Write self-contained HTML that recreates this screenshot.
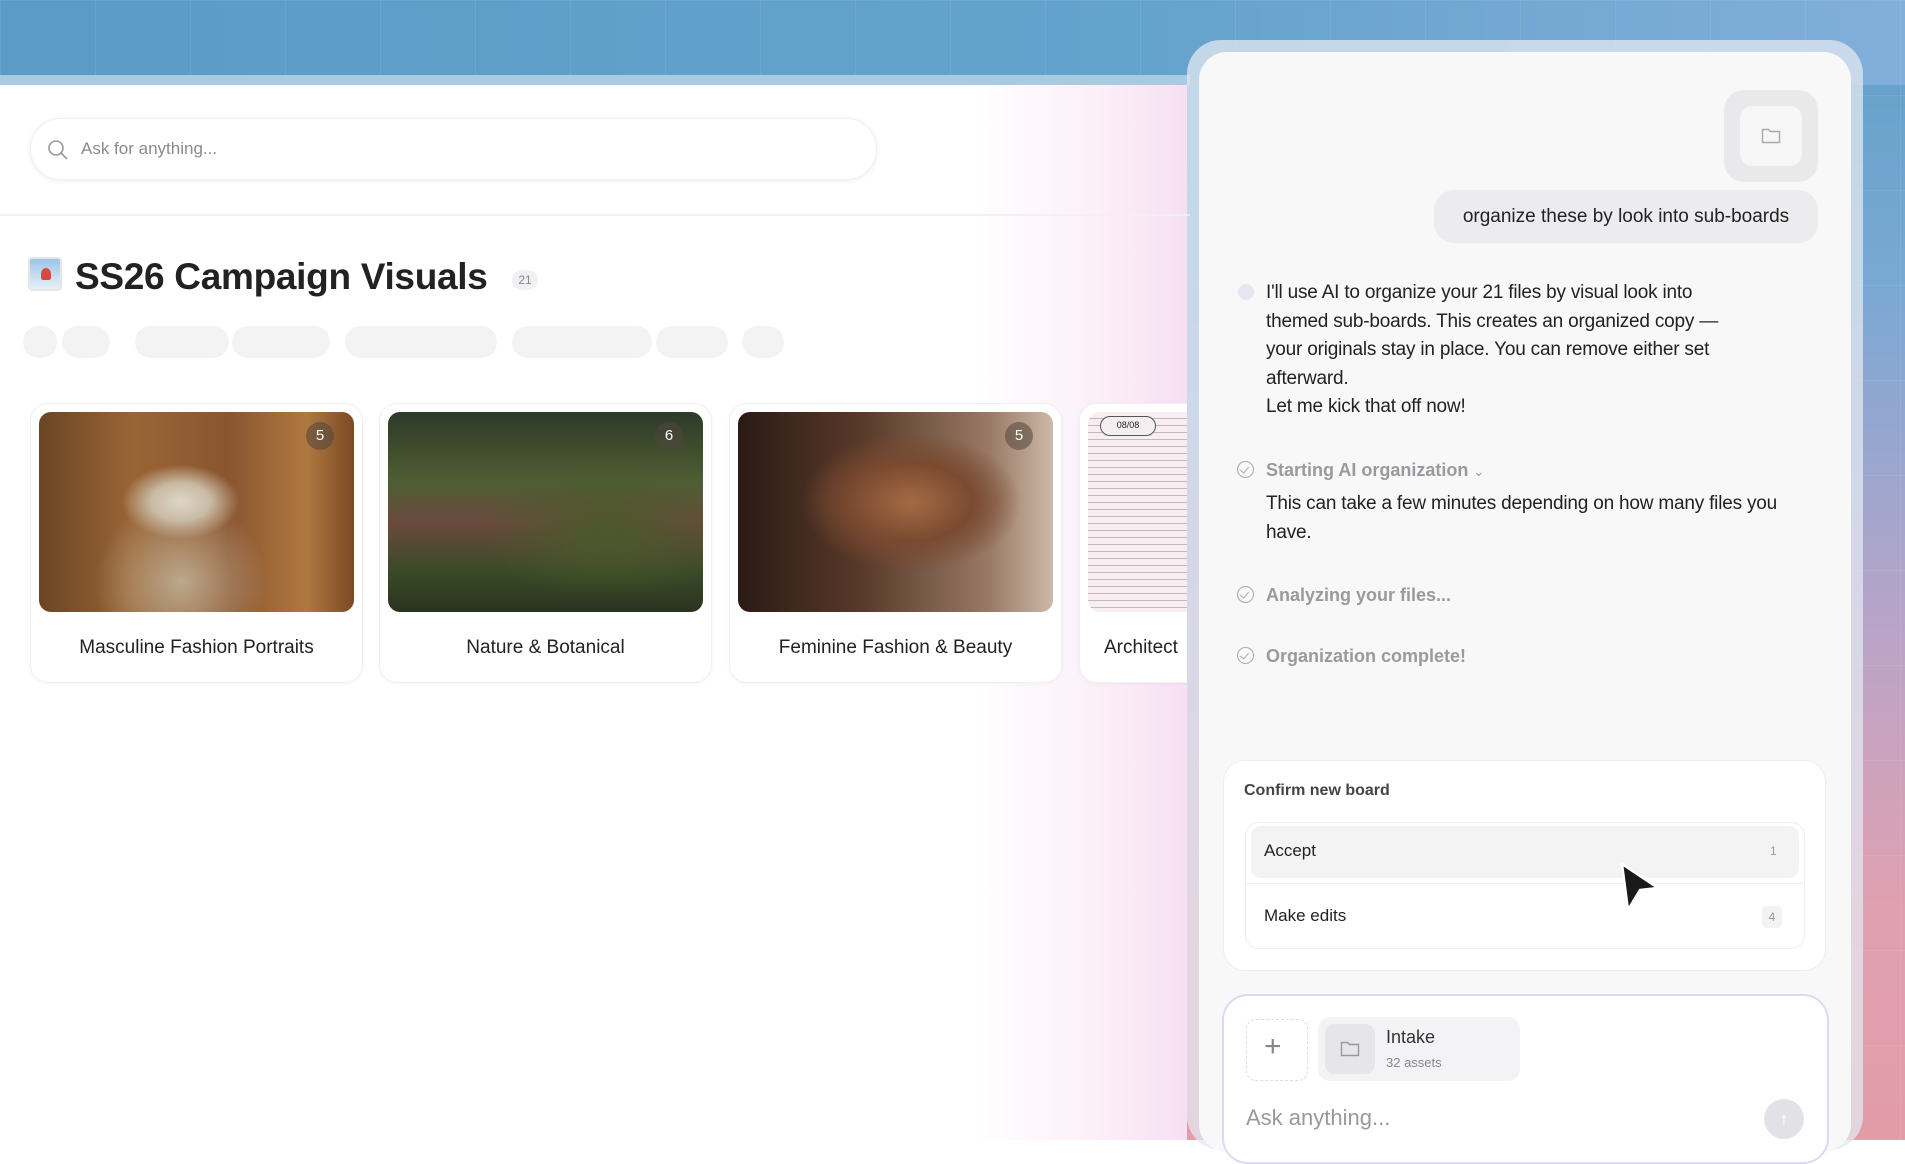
<!DOCTYPE html>
<html><head><meta charset="utf-8"><style>
*{box-sizing:border-box;margin:0;padding:0}
body{width:1905px;height:1140px;overflow:hidden;font-family:"Liberation Sans",sans-serif;position:relative;background:#fff;color:#1e1e1e}
.bgtop{position:absolute;left:0;top:0;width:1905px;height:1140px;background:linear-gradient(180deg,#5fa0c8 0%,#7aa8d4 25%,#b9a4c8 55%,#e0a0b0 80%,#e29ca8 100%)}
.bgtop2{position:absolute;left:0;top:0;width:1905px;height:85px;background:linear-gradient(90deg,#5a9cc6,#64a3cc 60%,#82aedb)}
.grid{position:absolute;inset:0;background-image:linear-gradient(rgba(255,255,255,.08) 1px,transparent 1px),linear-gradient(90deg,rgba(255,255,255,.08) 1px,transparent 1px);background-size:95px 95px}
.main{position:absolute;left:0;top:85px;width:1187px;height:1055px;background:linear-gradient(90deg,#fff 0%,#fff 82%,#fcf0f8 92%,#f6e0f2 100%);overflow:hidden}
.strip{position:absolute;left:0;top:75px;width:1190px;height:10px;background:#a9cbe2}
.search{position:absolute;left:30px;top:118px;width:847px;height:62px;border-radius:31px;background:#fff;box-shadow:0 1px 6px rgba(0,0,0,.08);border:1px solid #f0f0f0}
.search span{position:absolute;left:50px;top:20px;font-size:17px;color:#8a8a8a}
.divider{position:absolute;left:0;top:214px;width:1190px;height:2px;background:#f1f1f1}
.title{position:absolute;left:75px;top:256px;font-size:37px;font-weight:bold;color:#222;letter-spacing:-0.3px}
.badge{position:absolute;left:512px;top:270px;width:26px;height:20px;border-radius:10px;background:#f0f0f2;font-size:12px;color:#888;text-align:center;line-height:20px}
.pill{position:absolute;top:326px;height:32px;border-radius:16px;background:#f3f3f3}
.card{position:absolute;top:403px;width:333px;height:280px;border-radius:18px;background:#fff;border:1px solid #f0f0f0;box-shadow:0 1px 4px rgba(0,0,0,.04);overflow:hidden}
.card .img{position:absolute;left:8px;top:8px;right:8px;height:200px;border-radius:12px}
.card .lbl{position:absolute;left:0;right:0;top:233px;text-align:center;font-size:19px;color:#222}
.num{position:absolute;top:10px;right:20px;width:28px;height:28px;border-radius:14px;background:rgba(80,70,60,.55);color:#fff;font-size:15px;text-align:center;line-height:28px}
.panelo{position:absolute;left:1187px;top:40px;width:676px;height:1110px;border-radius:34px;background:rgba(225,232,240,.75)}
.panel{position:absolute;left:1199px;top:52px;width:652px;height:1100px;border-radius:28px;background:#f8f8f8}
.fbtn{position:absolute;left:1724px;top:90px;width:94px;height:92px;border-radius:20px;background:#e9e9eb}
.fbtn div{position:absolute;left:16px;top:16px;width:62px;height:60px;border-radius:12px;background:#f6f6f6}
.bubble{position:absolute;left:1434px;top:190px;width:384px;height:53px;border-radius:20px;background:#ececee;font-size:19px;line-height:53px;text-align:center;color:#222}
.ai{position:absolute;left:1266px;font-size:19px;color:#222;line-height:28.5px;letter-spacing:-0.2px}
.step{position:absolute;left:1266px;font-size:18px;font-weight:bold;color:#9a9a9e}
.chk{position:absolute;left:1237px;width:17px;height:17px;border:1.5px solid #aaa;border-radius:50%}
.chk:after{content:"";position:absolute;left:4px;top:3px;width:4px;height:7px;border:solid #aaa;border-width:0 1.5px 1.5px 0;transform:rotate(40deg)}
.confirm{position:absolute;left:1223px;top:760px;width:603px;height:211px;border-radius:22px;background:#fff;border:1px solid #eee}
.list{position:absolute;left:1245px;top:822px;width:560px;height:127px;border-radius:14px;border:1px solid #eceef0;background:#fff}
.acc{position:absolute;left:1251px;top:826px;width:548px;height:52px;border-radius:10px;background:#f3f3f4}
.input{position:absolute;left:1222px;top:994px;width:607px;height:170px;border-radius:26px;background:#fff;border:2px solid #ddd8f3}
</style></head><body>
<div class="bgtop"></div><div class="bgtop2"></div><div class="grid"></div>
<div class="strip"></div>
<div class="main">
<div class="card" style="left:1079px;top:318px;width:130px"><div class="img" style="right:0;background:repeating-linear-gradient(180deg,#f6eef0 0,#f6eef0 6px,#c9b6ba 6px,#c9b6ba 7px);top:8px"><div style="position:absolute;left:12px;top:4px;width:56px;height:20px;border:1.5px solid #555;border-radius:10px;background:#f5eef0;font-size:9px;text-align:center;line-height:17px">08/08</div></div><div class="lbl" style="text-align:left;left:24px">Architect</div></div>
</div>
<div class="search"><svg style="position:absolute;left:16px;top:20px" width="22" height="22" viewBox="0 0 22 22"><circle cx="9" cy="9" r="7" fill="none" stroke="#999" stroke-width="1.6"/><path d="M14 14l6 6" stroke="#999" stroke-width="1.6"/></svg><span>Ask for anything...</span></div>
<div class="divider"></div>
<div style="position:absolute;left:28px;top:257px;width:34px;height:34px;border-radius:4px;background:linear-gradient(180deg,#9cc6e8,#e8f0f6);border:2px solid #e6e6e6"><div style="position:absolute;left:11px;top:9px;width:10px;height:12px;background:#d84a3a;border-radius:50% 50% 20% 20%"></div></div>
<div class="title">SS26 Campaign Visuals</div>
<div class="badge">21</div>
<div class="pill" style="left:23px;width:34px"></div><div class="pill" style="left:62px;width:48px"></div>
<div class="pill" style="left:135px;width:94px"></div><div class="pill" style="left:232px;width:98px"></div>
<div class="pill" style="left:345px;width:152px"></div>
<div class="pill" style="left:512px;width:140px"></div><div class="pill" style="left:656px;width:72px"></div><div class="pill" style="left:742px;width:42px"></div>

<div class="card" style="left:30px"><div class="img" style="background:radial-gradient(ellipse at 45% 45%,#ddd6c8 0,#c9bba5 12%,transparent 24%),radial-gradient(ellipse at 45% 85%,#bca88c 0,transparent 35%),linear-gradient(90deg,#6a4526,#9a6535 30%,#8a5530 60%,#b07840 85%,#7a4a25)"><div class="num">5</div></div><div class="lbl">Masculine Fashion Portraits</div></div>
<div class="card" style="left:379px"><div class="img" style="background:radial-gradient(ellipse at 70% 60%,#4a5a2a 0,transparent 40%),linear-gradient(180deg,#2e3a2a 0%,#4f5e33 35%,#6a4a3e 55%,#3a4a28 80%,#2a3320)"><div class="num">6</div></div><div class="lbl">Nature &amp; Botanical</div></div>
<div class="card" style="left:729px"><div class="img" style="background:radial-gradient(ellipse at 55% 45%,#a56a45 0,#7a4a30 25%,transparent 45%),linear-gradient(90deg,#2a1a14,#5a3a2a 40%,#9a7a66 80%,#cdb9a8)"><div class="num">5</div></div><div class="lbl">Feminine Fashion &amp; Beauty</div></div>

<div class="panelo"></div>
<div class="panel"></div>
<div class="fbtn"><div></div></div>
<svg style="position:absolute;left:1761px;top:127px" width="20" height="18" viewBox="0 0 20 18"><path d="M1.5 2.5h6l2 2h9v11h-17z" fill="none" stroke="#aaa" stroke-width="1.4"/></svg>
<div class="bubble">organize these by look into sub-boards</div>
<div style="position:absolute;left:1238px;top:284px;width:16px;height:16px;border-radius:50%;background:#e8e4f2"></div>
<div class="ai" style="top:279px">I'll use AI to organize your 21 files by visual look into<br>themed sub-boards. This creates an organized copy —<br>your originals stay in place. You can remove either set<br>afterward.<br>Let me kick that off now!</div>
<div class="chk" style="top:461px"></div><div class="step" style="top:460px">Starting AI organization <span style="font-weight:normal;font-size:13px">⌄</span></div>
<div class="ai" style="top:490px">This can take a few minutes depending on how many files you<br>have.</div>
<div class="chk" style="top:586px"></div><div class="step" style="top:585px">Analyzing your files...</div>
<div class="chk" style="top:647px"></div><div class="step" style="top:646px">Organization complete!</div>

<div class="confirm"></div>
<div style="position:absolute;left:1244px;top:782px;font-size:16px;font-weight:bold;color:#444">Confirm new board</div>
<div class="list"></div>
<div class="acc"></div>
<div style="position:absolute;left:1245px;top:883px;width:560px;height:1px;background:#eceef0"></div>
<div style="position:absolute;left:1264px;top:841px;font-size:17px;color:#222">Accept</div>
<div style="position:absolute;left:1770px;top:844px;font-size:12px;color:#999">1</div>
<div style="position:absolute;left:1264px;top:906px;font-size:17px;color:#222">Make edits</div>
<div style="position:absolute;left:1762px;top:906px;width:20px;height:22px;border-radius:4px;background:#f3f3f4;font-size:12px;color:#999;text-align:center;line-height:22px">4</div>
<svg style="position:absolute;left:1614px;top:860px" width="52" height="56" viewBox="0 0 52 56"><path d="M8 4 L44 28 L26 30 L14 50 Z" fill="#1a1a1a" stroke="#fff" stroke-width="2.5" stroke-linejoin="round"/></svg>

<div class="input"></div>
<div style="position:absolute;left:1246px;top:1019px;width:62px;height:62px;border-radius:10px;border:1.5px dashed #ddd"></div>
<div style="position:absolute;left:1264px;top:1030px;font-size:30px;color:#888;font-weight:300">+</div>
<div style="position:absolute;left:1318px;top:1017px;width:202px;height:64px;border-radius:12px;background:#f3f3f5"></div>
<div style="position:absolute;left:1325px;top:1024px;width:50px;height:50px;border-radius:10px;background:#e6e6e9"></div>
<svg style="position:absolute;left:1340px;top:1040px" width="20" height="18" viewBox="0 0 20 18"><path d="M1.5 2.5h6l2 2h9v11h-17z" fill="none" stroke="#999" stroke-width="1.4"/></svg>
<div style="position:absolute;left:1386px;top:1027px;font-size:18px;color:#333">Intake</div>
<div style="position:absolute;left:1386px;top:1055px;font-size:13px;color:#888">32 assets</div>
<div style="position:absolute;left:1246px;top:1105px;font-size:22px;color:#999">Ask anything...</div>
<div style="position:absolute;left:1764px;top:1099px;width:40px;height:40px;border-radius:50%;background:#e2e2e6;color:#fff;text-align:center;line-height:40px;font-size:18px">↑</div>
</body></html>
